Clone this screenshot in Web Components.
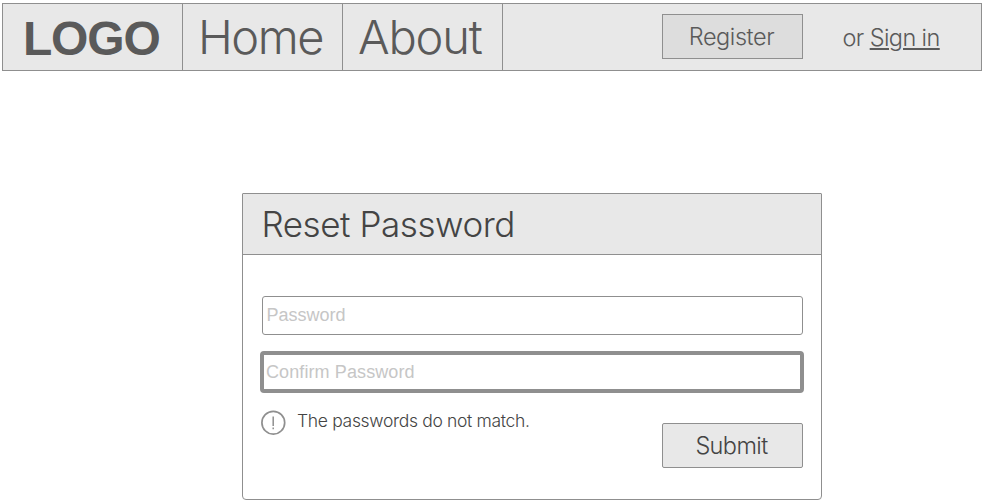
<!DOCTYPE html>
<html lang="en">
<head>
<meta charset="utf-8">
<title>Reset Password</title>
<style>
body{margin:0;background:#fff;font-family:Inter,"Liberation Sans",sans-serif;font-weight:300;color:#5a5a5a;--line:#8f8f8f;--fill:#e8e8e8}
</style>
</head>
<body>
<reset-page></reset-page>
<script>
const define=(name,html,setup)=>{
  const t=document.createElement('template');
  t.innerHTML=html;
  customElements.define(name,class extends HTMLElement{
    connectedCallback(){
      if(this.shadowRoot)return;
      this.attachShadow({mode:'open'}).append(t.content.cloneNode(true));
      if(setup)setup(this);
    }
  });
};

define('nav-item',`<style>
:host{display:flex;align-items:center;box-sizing:border-box;width:160px;padding-left:15px;border-right:1px solid var(--line);font-size:47px;line-height:66px;letter-spacing:-1.2px;white-space:nowrap}
:host([brand]){width:180px;padding:3px 0 0 20px;font:700 48px/63px "Liberation Sans",Arial,sans-serif;letter-spacing:-1.2px}
:host([tight]){letter-spacing:-1.45px}
</style><slot></slot>`);

define('box-button',`<style>
:host{display:block}
button{display:block;box-sizing:border-box;width:141px;height:45px;margin:0;padding:0 2px 0 0;border:1px solid var(--line);border-radius:var(--radius,0);background:var(--face,var(--fill));font:inherit;font-size:23.5px;line-height:43px;letter-spacing:inherit;color:inherit;text-align:center}
</style><button type="button"><slot></slot></button>`);

define('top-bar',`<style>
:host{display:flex;align-items:center;box-sizing:border-box;width:980px;height:68px;border:1px solid var(--line);background:var(--fill)}
box-button{margin:-1px 39.5px 0 auto;--face:#ddd;letter-spacing:-.42px}
.sign{display:flex;gap:6px;width:138.5px;padding-top:1px;font-size:23.5px;line-height:65px;letter-spacing:-.6px;white-space:nowrap}
a{color:inherit;text-decoration:underline;text-decoration-thickness:2px;text-underline-offset:2px}
</style>
<nav-item brand>LOGO</nav-item><nav-item tight>Home</nav-item><nav-item>About</nav-item>
<box-button>Register</box-button>
<div class="sign"><span>or</span><a>Sign in</a></div>`);

define('text-field',`<style>
:host{display:block;box-sizing:border-box;width:541px;height:39px;padding-left:3.5px;border:1px solid var(--line);border-radius:3px;font:400 18px/36px "Liberation Sans",Arial,sans-serif;color:#c6c6c6}
:host([active]){width:544px;height:42px;margin-left:-2px;padding-left:2px;border-width:4px;border-radius:4px;line-height:34px;letter-spacing:.1px}
</style><slot></slot>`);

define('error-note',`<style>
:host{display:flex;gap:11px;align-items:flex-start;font-size:17.5px;line-height:22px;letter-spacing:-.32px;color:#444;white-space:nowrap}
svg{display:block;flex:none}
</style>
<svg width="26" height="26" viewBox="0 0 26 26" fill="none" stroke="#8f8f8f"><circle cx="13.3" cy="12.7" r="11.4" stroke-width="1.7"/><path d="M13.2 6.5v9.6M13.2 17.4v1.8" stroke-width="1.5"/></svg>
<span><slot></slot></span>`);

define('form-card',`<style>
:host{display:block;box-sizing:border-box;width:580px;height:307px;border:1px solid var(--line);border-radius:1px 1px 4px 4px;overflow:hidden;color:#444}
header{height:60px;padding-left:18.5px;border-bottom:1px solid var(--line);background:var(--fill);font-size:35px;line-height:60px;letter-spacing:-.45px}
.body{display:flex;flex-direction:column;padding:41px 18px 0 19px}
</style><header><slot name="title"></slot></header><div class="body"><slot></slot></div>`);

define('reset-page',`<style>
:host{display:flex;flex-direction:column;box-sizing:border-box;width:984px;height:501px;padding:3px 2px 0;overflow:hidden}
form-card{margin:122px 0 0 240px}
.confirm{margin-top:16px}
.end{display:flex;justify-content:space-between;align-items:flex-start}
error-note{margin:17px 0 0 -2px}
.end box-button{margin-top:30px;--radius:2px;letter-spacing:-.6px}
</style>
<top-bar></top-bar>
<form-card><span slot="title">Reset Password</span>
<text-field>Password</text-field>
<text-field class="confirm" active>Confirm Password</text-field>
<div class="end"><error-note>The passwords do not match.</error-note><box-button>Submit</box-button></div>
</form-card>`);
</script>
</body>
</html>
